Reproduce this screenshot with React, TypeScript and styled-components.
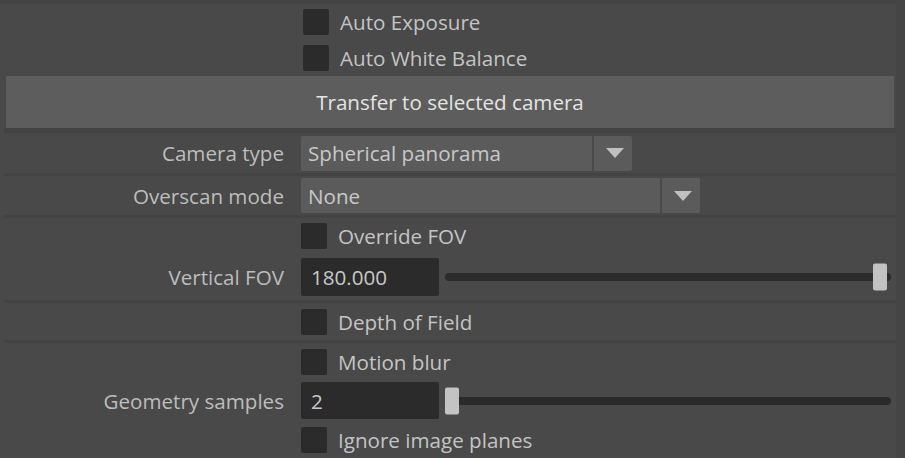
import React from 'react';
import styled, {createGlobalStyle} from 'styled-components';

const GlobalStyle = createGlobalStyle`
  html, body {
    margin: 0;
    padding: 0;
    background: #494949;
  }
  body {
    font-family: "Open Sans", "Noto Sans", sans-serif;
  }
`

const Window = styled.div`
  width: 905px;
  height: 458px;
  display: flex;
  background: #494949;
  overflow: hidden;
`

const Panel = styled.div`
  width: 896px;
  display: flex;
  flex-direction: column;
`

const Gutter = styled.div`
  width: 9px;
  background: #454545;
`

const Separator = styled.div<{$h: number; $inset?: number}>`
  flex-shrink: 0;
  height: ${props => props.$h}px;
  margin-left: ${props => props.$inset ?? 4}px;
  background: #434343;
`

const Row = styled.div<{$h: number}>`
  flex-shrink: 0;
  height: ${props => props.$h}px;
  display: grid;
  grid-template-columns: 284px 1fr;
  column-gap: 17px;
  align-items: center;
`

const Label = styled.span`
  text-align: right;
  color: #bdbdbd;
  font-size: 20.6px;
  white-space: nowrap;
`

const CheckItem = styled.label<{$shift?: number}>`
  display: flex;
  align-items: center;
  gap: 11px;
  margin-left: ${props => props.$shift ?? 0}px;
  color: #c4c4c4;
  font-size: 20.6px;
  white-space: nowrap;
`

const Box = styled.span`
  width: 26px;
  height: 26px;
  border-radius: 2px;
  background: #2b2b2b;
  flex-shrink: 0;
`

const BigButton = styled.div`
  flex-shrink: 0;
  height: 52px;
  margin: 0 2px 0 6px;
  background: #5d5d5d;
  color: #e4e4e4;
  font-size: 20.6px;
  display: flex;
  align-items: center;
  justify-content: center;
`

const Dropdown = styled.div<{$w: number}>`
  width: ${props => props.$w}px;
  height: 35px;
  display: flex;
  border-radius: 2px;
  overflow: hidden;
`

const DropValue = styled.div`
  flex: 1;
  background: #5b5b5b;
  color: #c8c8c8;
  font-size: 20.6px;
  padding-left: 7px;
  display: flex;
  align-items: center;
`

const DropArrow = styled.div`
  width: 38px;
  margin-left: 2px;
  background: #5b5b5b;
  display: flex;
  align-items: center;
  justify-content: center;
  &::after {
    content: "";
    border-left: 9px solid transparent;
    border-right: 9px solid transparent;
    border-top: 10px solid #c0c0c0;
    margin-left: 4px;
  }
`

const FieldRow = styled.div`
  display: flex;
  align-items: center;
  padding-right: 5px;
`

const NumberField = styled.div<{$h: number}>`
  width: 138px;
  height: ${props => props.$h}px;
  background: #2b2b2b;
  border-radius: 2px;
  color: #c8c8c8;
  font-size: 20.6px;
  padding-left: 10px;
  box-sizing: border-box;
  display: flex;
  align-items: center;
  flex-shrink: 0;
`

const SliderTrack = styled.div`
  position: relative;
  flex: 1;
  height: 8px;
  margin-left: 6px;
  border-radius: 4px;
  background: #2b2b2b;
`

const Thumb = styled.div`
  position: absolute;
  top: 50%;
  width: 14px;
  height: 27px;
  transform: translateY(-50%);
  border-radius: 2px;
  background: #c3c3c3;
`

function Slider({value}: {value: number}) {
    return (
        <SliderTrack>
            <Thumb style={{left: `calc(${value * 100}% - ${value * 18}px)`}}/>
        </SliderTrack>
    );
}

function Check({text, shift}: {text: string; shift?: number}) {
    return (
        <CheckItem $shift={shift}>
            <Box/>
            {text}
        </CheckItem>
    );
}

export default function App() {
    return (
        <>
            <GlobalStyle/>
            <Window>
                <Panel>
                    <Separator $h={4} $inset={0}/>
                    <Row $h={36}><span/><Check text="Auto Exposure" shift={2}/></Row>
                    <Row $h={36}><span/><Check text="Auto White Balance" shift={2}/></Row>
                    <BigButton>Transfer to selected camera</BigButton>
                    <Separator $h={5}/>
                    <Row $h={40}>
                        <Label>Camera type</Label>
                        <Dropdown $w={331}>
                            <DropValue>Spherical panorama</DropValue>
                            <DropArrow/>
                        </Dropdown>
                    </Row>
                    <Separator $h={3}/>
                    <Row $h={39}>
                        <Label>Overscan mode</Label>
                        <Dropdown $w={399}>
                            <DropValue>None</DropValue>
                            <DropArrow/>
                        </Dropdown>
                    </Row>
                    <Separator $h={3}/>
                    <Row $h={36}><span/><Check text="Override FOV"/></Row>
                    <Row $h={46}>
                        <Label>Vertical FOV</Label>
                        <FieldRow>
                            <NumberField $h={38}>180.000</NumberField>
                            <Slider value={1}/>
                        </FieldRow>
                    </Row>
                    <Separator $h={3}/>
                    <Row $h={37}><span/><Check text="Depth of Field"/></Row>
                    <Separator $h={3}/>
                    <Row $h={38}><span/><Check text="Motion blur"/></Row>
                    <Row $h={39}>
                        <Label>Geometry samples</Label>
                        <FieldRow>
                            <NumberField $h={37}>2</NumberField>
                            <Slider value={0}/>
                        </FieldRow>
                    </Row>
                    <Row $h={40}><span/><Check text="Ignore image planes"/></Row>
                </Panel>
                <Gutter/>
            </Window>
        </>
    );
}
